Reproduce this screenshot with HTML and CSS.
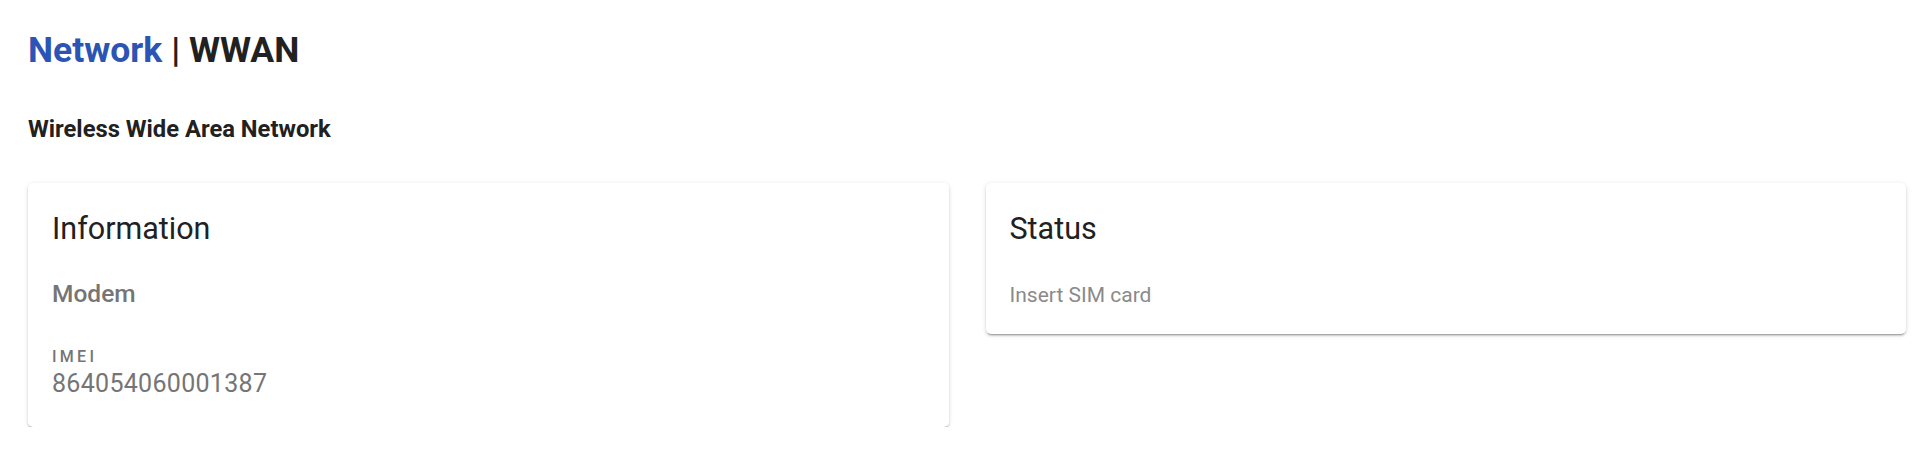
FILE: index.html
```html
<!DOCTYPE html>
<html lang="en">
<head>
<meta charset="utf-8">
<title>Network | WWAN</title>
<link rel="stylesheet" href="styles.css">
</head>
<body>
<main class="page">
  <h1 class="page-title"><span class="crumb">Network</span> | WWAN</h1>
  <h2 class="page-subtitle">Wireless Wide Area Network</h2>
  <div class="cards">
    <section class="card">
      <h3 class="card-title">Information</h3>
      <h4 class="section-title">Modem</h4>
      <div class="field">
        <div class="field-label">IMEI</div>
        <div class="field-value">864054060001387</div>
      </div>
    </section>
    <section class="card">
      <h3 class="card-title">Status</h3>
      <p class="status-text">Insert SIM card</p>
    </section>
  </div>
</main>
</body>
</html>
```
FILE: styles.css
```css
html, body {
  margin: 0;
  padding: 0;
  background: #ffffff;
}
body {
  font-family: Roboto, "Liberation Sans", Arial, sans-serif;
  color: #212121;
}
.page {
  padding: 30px 25px 0 28px;
}
.page-title {
  margin: 0;
  font-size: 35.5px;
  line-height: 40px;
  font-weight: 700;
  color: #212121;
}
.crumb {
  color: #2b54b4;
}
.page-subtitle {
  margin: 45px 0 0;
  font-size: 23.75px;
  line-height: 28px;
  font-weight: 700;
  color: #212121;
}
.cards {
  margin-top: 40px;
  display: grid;
  grid-template-columns: 1fr 1fr;
  column-gap: 37px;
  align-items: start;
}
.card {
  background: #fff;
  border-radius: 5px;
  box-shadow: 0 3px 1px -2px rgba(0,0,0,0.2), 0 2px 2px 0 rgba(0,0,0,0.14), 0 1px 5px 0 rgba(0,0,0,0.12);
  padding: 28px 24px 28px 24px;
}
.card-title {
  margin: 0;
  font-size: 30.5px;
  line-height: 36px;
  font-weight: 400;
  color: #212121;
}
.section-title {
  margin: 33px 0 0;
  font-size: 24.5px;
  line-height: 28px;
  font-weight: 500;
  color: #757575;
}
.field {
  margin-top: 39px;
}
.field-label {
  font-size: 16px;
  line-height: 20px;
  font-weight: 500;
  letter-spacing: 3.3px;
  color: #757575;
}
.field-value {
  margin-top: 2px;
  font-size: 25px;
  line-height: 30px;
  letter-spacing: 0.3px;
  color: #757575;
}
.status-text {
  margin: 35px 0 0;
  font-size: 21px;
  line-height: 26px;
  color: #8a8a8a;
}
.card:last-child {
  padding-bottom: 26px;
}
```
